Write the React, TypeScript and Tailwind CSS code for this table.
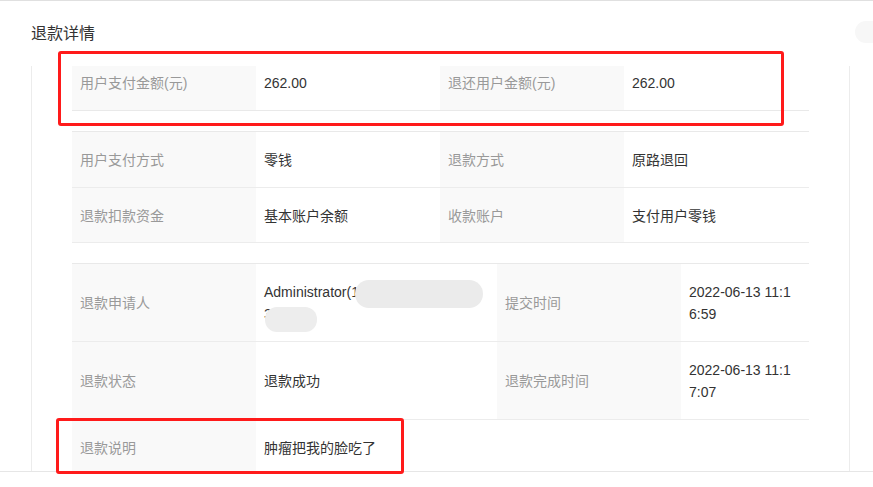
import React from "react";

const Label = ({ children, cls = "" }: { children: React.ReactNode; cls?: string }) => (
  <div className={`bg-[#f9f9f9] px-[8px] text-[#999999] flex ${cls}`}>{children}</div>
);
const Value = ({ children, cls = "" }: { children: React.ReactNode; cls?: string }) => (
  <div className={`px-[8px] text-[#333333] flex ${cls}`}>{children}</div>
);

export default function App() {
  return (
    <div
      className="relative w-[873px] h-[487px] overflow-hidden bg-white border-t border-[#e0e0e0] text-[14px] leading-[22px]"
      style={{ fontFamily: '"Liberation Sans", Arial, "Noto Sans CJK SC", sans-serif' }}
    >
      <div className="h-[65px] pl-[31px] flex items-center text-[16px] text-[#333333]">退款详情</div>
      <div className="ml-[31px] w-[819px] h-[405px] border-l border-r border-[#ececec] px-[40px] overflow-hidden">
        {/* table 1 */}
        <div className="grid grid-cols-[184px_184px_184px_185px] h-[45px] border-b border-[#e9e9e9]">
          <Label cls="pt-[6px]">用户支付金额(元)</Label>
          <Value cls="pt-[6px]">262.00</Value>
          <Label cls="pt-[6px]">退还用户金额(元)</Label>
          <Value cls="pt-[6px]">262.00</Value>
        </div>
        {/* table 2 */}
        <div className="mt-[20px] border-t border-[#e9e9e9]">
          <div className="grid grid-cols-[184px_184px_184px_185px] h-[56px] border-b border-[#ececec]">
            <Label cls="items-center">用户支付方式</Label>
            <Value cls="items-center">零钱</Value>
            <Label cls="items-center">退款方式</Label>
            <Value cls="items-center">原路退回</Value>
          </div>
          <div className="grid grid-cols-[184px_184px_184px_185px] h-[55px] border-b border-[#ececec]">
            <Label cls="items-center pt-[2px]">退款扣款资金</Label>
            <Value cls="items-center pt-[2px]">基本账户余额</Value>
            <Label cls="items-center pt-[2px]">收款账户</Label>
            <Value cls="items-center pt-[2px]">支付用户零钱</Value>
          </div>
        </div>
        {/* table 3 */}
        <div className="mt-[20px] border-t border-[#e9e9e9]">
          <div className="grid grid-cols-[184px_241px_184px_128px] h-[78px] border-b border-[#ececec]">
            <Label cls="items-center">退款申请人</Label>
            <Value cls="items-center relative">
              <div>
                Administrator(1
                <br />3
              </div>
              <div className="absolute left-[99px] top-[16px] w-[128px] h-[28px] rounded-[14px] bg-[#ebebeb]" />
              <div className="absolute left-[9px] top-[43px] w-[52px] h-[25px] rounded-[12px] bg-[#ededed]" />
            </Value>
            <Label cls="items-center">提交时间</Label>
            <Value cls="items-center break-all">2022-06-13 11:16:59</Value>
          </div>
          <div className="grid grid-cols-[184px_241px_184px_128px] h-[78px] border-b border-[#ececec]">
            <Label cls="items-center">退款状态</Label>
            <Value cls="items-center">退款成功</Value>
            <Label cls="items-center">退款完成时间</Label>
            <Value cls="items-center break-all">2022-06-13 11:17:07</Value>
          </div>
          <div className="grid grid-cols-[184px_241px_184px_128px] h-[55px]">
            <Label cls="items-center">退款说明</Label>
            <Value cls="items-center">肿瘤把我的脸吃了</Value>
            <div />
            <div />
          </div>
        </div>
      </div>
      <div className="border-t border-[#e6e6e6]" />

      {/* top-right faint button */}
      <div className="absolute left-[855px] top-[20px] w-[30px] h-[22px] rounded-full bg-[#f7f7f7]" />

      {/* red annotation boxes */}
      <div className="absolute left-[58px] top-[50px] w-[726px] h-[75px] border-[3px] border-[#ff1a1a] rounded-[3px]" />
      <div className="absolute left-[56px] top-[417px] w-[348px] h-[56px] border-[3px] border-[#ff1a1a] rounded-[3px]" />
    </div>
  );
}
